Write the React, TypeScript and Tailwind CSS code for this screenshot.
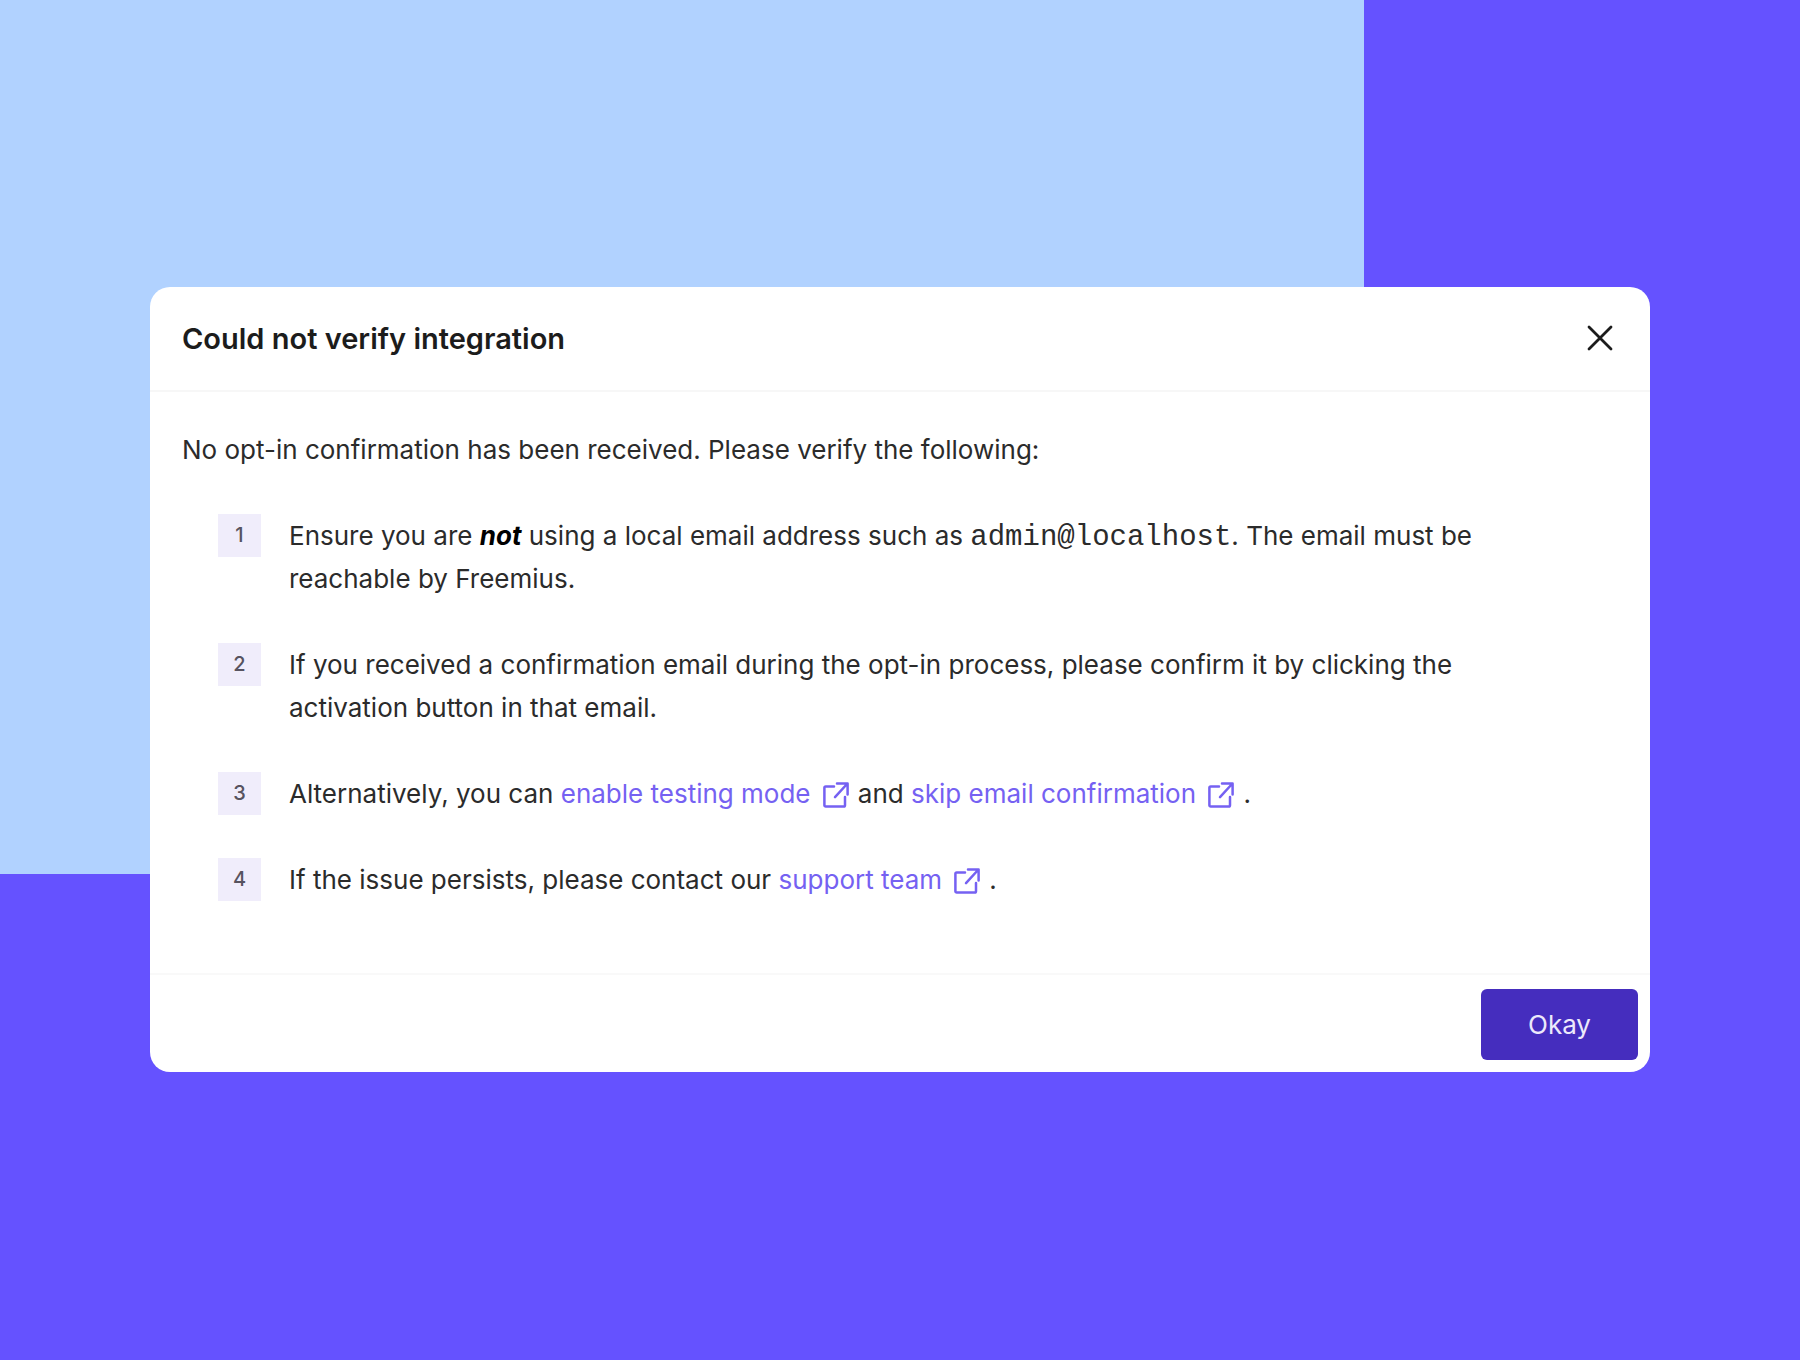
import type { ReactNode } from "react";

function ExternalIcon() {
  return (
    <svg
      viewBox="0 0 26 26"
      fill="none"
      stroke="currentColor"
      strokeWidth="2.5"
      strokeLinecap="round"
      strokeLinejoin="round"
      className="mr-0.5 ml-3 inline-block size-[26px] align-[-5px]"
      aria-hidden="true"
    >
      <path d="M11 4.500H2.700a1.300 1.300 0 0 0-1.300 1.300v17.500a1.300 1.300 0 0 0 1.300 1.300h18a1.300 1.300 0 0 0 1.300-1.300V15" />
      <path d="M14 1.500h10.600V12.500M24 2 12 15.200" />
    </svg>
  );
}

function ExternalLink({ href, children }: { href: string; children: ReactNode }) {
  return (
    <a href={href} className="text-[#7561f2]">
      {children}
      <ExternalIcon />
    </a>
  );
}

const steps: ReactNode[] = [
  <>
    Ensure you are <em className="font-bold text-black">not</em> using a local email address such as{" "}
    <code className="font-['Liberation_Mono',monospace] text-[29px] leading-none">admin@localhost</code>. The
    email must be reachable by Freemius.
  </>,
  <>
    If you received a confirmation email during the opt-in process, please confirm it by clicking the
    activation button in that email.
  </>,
  <>
    Alternatively, you can <ExternalLink href="#testing-mode">enable testing mode</ExternalLink> and{" "}
    <ExternalLink href="#skip-confirmation">skip email confirmation</ExternalLink> .
  </>,
  <>
    If the issue persists, please contact our <ExternalLink href="#support">support team</ExternalLink> .
  </>,
];

function Step({ number, children }: { number: number; children: ReactNode }) {
  return (
    <li className="flex items-start gap-7">
      <span className="flex size-[43px] shrink-0 items-center justify-center bg-[#f0edfb] text-xl font-medium text-[#57535f]">
        {number}
      </span>
      <p className="max-w-[1210px]">{children}</p>
    </li>
  );
}

export default function App() {
  return (
    <main className="flex min-h-screen items-center justify-center bg-[#6552ff] bg-[linear-gradient(#b1d2ff,#b1d2ff)] bg-[length:75.8%_64.3%] bg-no-repeat px-8 pb-0.5 font-['Inter',sans-serif] text-[26px] leading-[43px] text-[#2b2b2b]">
      <section
        role="dialog"
        aria-labelledby="dialog-title"
        className="w-full max-w-[1500px] rounded-[20px] bg-white"
      >
        <header className="flex items-center justify-between border-b-2 border-[#f7f7f7] px-8 py-[30px]">
          <h1 id="dialog-title" className="text-[29px] font-semibold text-[#1c1c1c]">
            Could not verify integration
          </h1>
          <button type="button" aria-label="Close" className="p-1 text-[#1c1c1c]">
            <svg
              viewBox="0 0 28 28"
              fill="none"
              stroke="currentColor"
              strokeWidth="2.8"
              strokeLinecap="round"
              className="size-7"
            >
              <path d="M3 3 25 25M25 3 3 25" />
            </svg>
          </button>
        </header>

        <div className="px-8 pt-9 pb-[72px]">
          <p>No opt-in confirmation has been received. Please verify the following:</p>
          <ol className="mt-[43px] flex flex-col gap-[43px] pl-9">
            {steps.map((step, i) => (
              <Step key={i} number={i + 1}>
                {step}
              </Step>
            ))}
          </ol>
        </div>

        <footer className="flex justify-end border-t-2 border-[#f9f9f9] px-3 pt-[14px] pb-3">
          <button type="button" className="h-[71px] w-[157px] rounded-md bg-[#452dbe] text-[#ece9fb]">
            Okay
          </button>
        </footer>
      </section>
    </main>
  );
}
